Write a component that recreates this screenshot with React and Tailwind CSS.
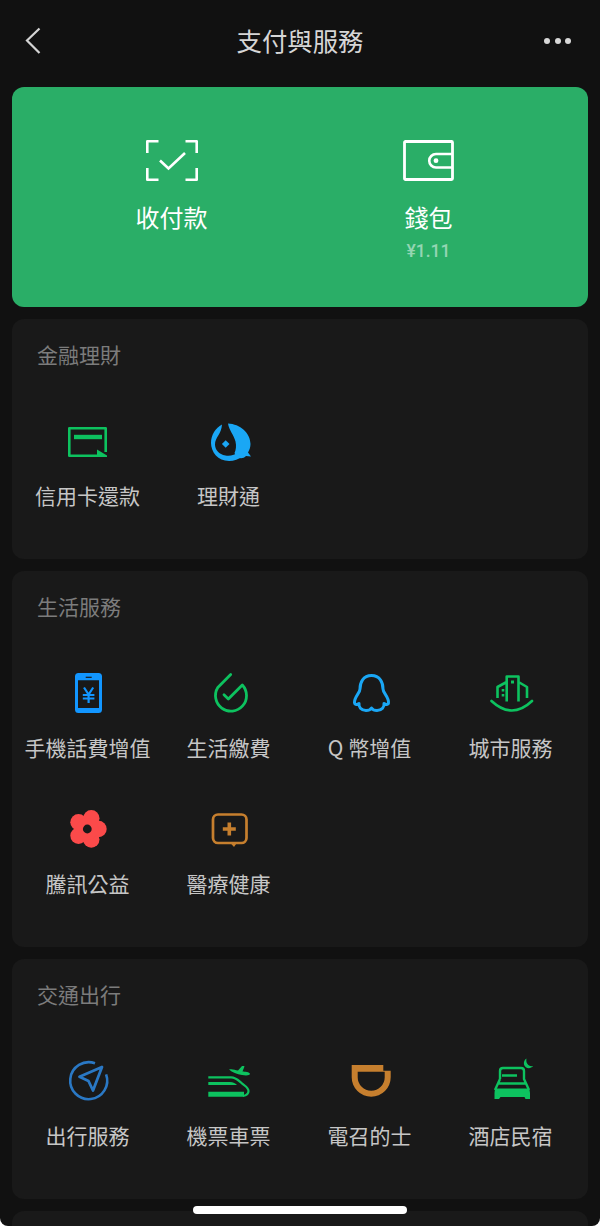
const FONT = "font-['Noto_Sans_CJK_TC','Noto_Sans',sans-serif]";

const G = "#0dc25f";
const B = "#1aa7f5";
const O = "#c67f2e";

function Svg({ children }) {
  return (
    <svg width="48" height="48" viewBox="0 0 48 48" fill="none" className="block">
      {children}
    </svg>
  );
}

const CardIcon = () => (
  <Svg>
    <path d="M41.7 33V9.3H5.3V36.7H33" stroke={G} strokeWidth="2.6" strokeLinejoin="round" />
    <path d="M10 18H38" stroke={G} strokeWidth="4.4" />
    <path d="M33 30.5L43 36.5V38H33Z" fill={G} />
  </Svg>
);

const FishIcon = () => (
  <Svg>
    <path d="M17 5.5C10.5 9 6 16 6 24C6 33 13 42 24 42C29 42 34 40 37.5 37.5L33.5 33.5C30 36 25 37.3 20.5 36.5C14 35.5 10 30.5 10 25.5C10 18.5 16.5 15 17 5.5Z" fill={B} />
    <path d="M23 4.5C35 5 45.5 14 45.5 25C45.5 28 44.5 31 43 33.5L46 37.5L41 37C38.5 39.5 35.5 40 32 38C30.5 36.5 30 35 29.5 34C31 31 31.5 27 30.5 22.5C29 16 24 11.5 23 4.5Z" fill={B} />
    <path d="M20.7 21.2L24.5 25L20.7 28.8L16.9 25Z" fill={B} />
  </Svg>
);

const PhoneIcon = () => {
  const c = "#1296ff";
  return (
    <Svg>
      <rect x="12.5" y="5.5" width="24" height="37" rx="2" stroke={c} strokeWidth="3" />
      <path d="M12 7H37V11.2H12ZM12 39H37V43H12Z" fill={c} />
      <path d="M21.7 8.3H27.7" stroke="#191919" strokeWidth="1.2" />
      <path d="M20 18.5L24.6 25.5L29.2 18.5M18.8 26H30.4M18.8 29.5H30.4M24.6 25.5V34" stroke={c} strokeWidth="2.2" />
    </Svg>
  );
};

const DropIcon = () => (
  <Svg>
    <path d="M25.7 5.5L12.8 18.5A15.5 15.5 0 1 0 37.3 16L23.3 30L19 25.7" stroke={G} strokeWidth="2.8" strokeLinecap="round" strokeLinejoin="round" />
  </Svg>
);

const QQIcon = () => (
  <Svg>
    <path d="M25.5 6.5C17 6.5 14 13.5 14 20C14 24 8 28 8.5 34C8.7 36 11 36 13 34.5C12.5 38 15 41.5 20 41.5C22.5 41.5 24.5 40.5 25.5 39C26.5 40.5 28.5 41.5 31 41.5C36 41.5 38.5 38 38 34.5C40 36 42.3 36 42.5 34C43 28 37 24 37 20C37 13.5 34 6.5 25.5 6.5Z" stroke={B} strokeWidth="3" strokeLinejoin="round" />
  </Svg>
);

const CityIcon = () => (
  <Svg>
    <path d="M4.5 32Q25 51 45 32" stroke={G} strokeWidth="2.6" strokeLinecap="round" />
    <path d="M10.5 29V18L19.7 13V7.5H31.5V13L40 18V29M19.7 13V32.5M31.5 13V32.5" stroke={G} strokeWidth="2.6" strokeLinejoin="round" />
    <path d="M24 11.5H27V14.5H24ZM14.7 20H17.3V22.6H14.7ZM14.7 25H17.3V27.6H14.7Z" fill={G} />
  </Svg>
);

const FlowerIcon = () => {
  const c = "#fb4a4a";
  const pts = [
    [27.3, 13.3],
    [34.5, 24],
    [27.3, 34.5],
    [14.5, 30.8],
    [14.5, 17.2],
  ];
  return (
    <Svg>
      {pts.map(([x, y], i) => (
        <circle key={i} cx={x} cy={y} r="8.2" fill={c} />
      ))}
      <circle cx="23.3" cy="24" r="11" fill={c} />
      <circle cx="23.3" cy="24" r="4.4" fill="#191919" />
    </Svg>
  );
};

const MedicalIcon = () => (
  <Svg>
    <rect x="8" y="9.5" width="33.5" height="28.5" rx="5" stroke={O} strokeWidth="2.7" />
    <path d="M24.3 17.5V30.5M17.8 24H30.8" stroke={O} strokeWidth="3.6" />
    <path d="M24.5 37H32.5L29 42Z" fill={O} />
  </Svg>
);

const NavIcon = () => {
  const c = "#2a78c4";
  return (
    <Svg>
      <path d="M31 6.3A18.5 18.5 0 1 0 42.1 17.4" stroke={c} strokeWidth="2.6" />
      <path d="M38 10L15.5 19.8L24.5 24L29 33.5Z" stroke={c} strokeWidth="2.8" strokeLinejoin="round" />
    </Svg>
  );
};

const TrainIcon = () => (
  <Svg>
    <path d="M24 12.5C27 11.5 30 13 33 13.5L37 9C38.5 9 39.5 9 39.5 9.5L37.5 14.5C40 14.8 44.5 14.8 45 16.8C45 18.5 41 18.7 37 18C32 17 27 15.5 24 12.5Z" fill={G} />
    <path d="M3.3 20.3H26C31 20.3 33 23 36.5 26C39 28.5 43.5 30 43.5 34C43.5 37 41.5 38.5 38 39" stroke={G} strokeWidth="2.2" />
    <path d="M3.3 25H25C28 25 31 26.5 32 28H3.3Z" fill={G} />
    <path d="M3.3 34.7H39V39.7H3.3Z" fill={G} />
  </Svg>
);

const DidiIcon = () => (
  <Svg>
    <path
      fillRule="evenodd"
      clipRule="evenodd"
      d="M5.7 8H37.3V13.7H44.7V20.2A19.5 19.5 0 0 1 5.7 20.2ZM11.7 14.7V20.2A13.5 13.5 0 0 0 38.7 20.2V14.7Z"
      fill={O}
    />
  </Svg>
);

const BedIcon = () => (
  <Svg>
    <path d="M13 22V14Q13 11 16 11H34Q37 11 37 14V22L42 33M13 22L8 33M15 18.5H30M11.5 26.5H39" stroke={G} strokeWidth="2.4" strokeLinejoin="round" />
    <path d="M8.5 31.5H41.5Q43 33 43 36V42H38.5L37.5 40H13.5L12 42H7.5V36Q7.5 33 8.5 31.5Z" fill={G} />
    <path d="M39.5 1.5C38.5 6 41.5 10 46 9C43.5 12.5 38 11.5 37 7.5C36.5 5 37.5 2.5 39.5 1.5Z" fill={G} />
  </Svg>
);

function Item({ Icon, label, labelGap }) {
  return (
    <div className="flex flex-col items-center">
      <div className="h-12 w-12">
        <Icon />
      </div>
      <div className={`whitespace-nowrap text-[21px] leading-7 text-[#c6c6c6] ${labelGap}`}>{label}</div>
    </div>
  );
}

function Section({ title, items, first = false, titleGap = "mt-[49.5px]", labelGap = "mt-4" }) {
  return (
    <section className={`rounded-xl bg-[#191919] pb-[49.5px] pl-[5px] pr-[7px] pt-[20.5px] ${first ? "mt-3" : "mt-[12.5px]"}`}>
      <h2 className="pl-5 text-[21px] font-normal leading-7 text-[#7c7c7c]">{title}</h2>
      <div className={`grid grid-cols-4 gap-y-11 ${titleGap}`}>
        {items.map((it) => (
          <Item key={it.label} {...it} labelGap={labelGap} />
        ))}
      </div>
    </section>
  );
}

export default function App() {
  return (
    <div className="h-[1226px] w-[600px] bg-white">
      <div className={`relative h-[1226px] w-[600px] overflow-hidden rounded-b-lg bg-[#111111] px-3 ${FONT}`}>
        <header className="relative flex h-[87px] items-center justify-between pb-1.5">
          <svg width="18" height="28" viewBox="0 0 18 28" fill="none" className="ml-3">
            <path d="M15.5 1.5L3 13.5L15.5 26" stroke="#d4d4d4" strokeWidth="2.2" />
          </svg>
          <h1 className="absolute inset-x-0 top-[22px] text-center text-[25.4px] font-normal leading-9 text-[#d6d6d6]">
            支付與服務
          </h1>
          <div className="mr-[17px] flex gap-[4.5px]">
            <span className="h-[6px] w-[6px] rounded-full bg-[#d8d8d8]" />
            <span className="h-[6px] w-[6px] rounded-full bg-[#d8d8d8]" />
            <span className="h-[6px] w-[6px] rounded-full bg-[#d8d8d8]" />
          </div>
        </header>

        <section className="grid h-[220px] grid-cols-2 rounded-xl bg-[#2aae67] px-[31px] pt-[53px]">
          <div className="flex flex-col items-center">
            <svg width="52" height="41" viewBox="0 0 52 41" fill="none" className="block">
              <path d="M1.3 13V1.3H12.5M39.5 1.3H50.7V13M50.7 28V39.7H39.5M12.5 39.7H1.3V28" stroke="#fff" strokeWidth="2.6" strokeLinejoin="round" />
              <path d="M14 20.5L22.5 28.5L39 13" stroke="#fff" strokeWidth="2.6" />
            </svg>
            <div className="mt-5 text-[24px] font-normal leading-8 text-white">收付款</div>
          </div>
          <div className="flex flex-col items-center">
            <svg width="52" height="41" viewBox="0 0 52 41" fill="none" className="block">
              <rect x="1.5" y="1.5" width="48" height="38" rx="1" stroke="#fff" strokeWidth="2.8" />
              <path d="M49 14H33A6.5 6.5 0 0 0 33 27.5H49" stroke="#fff" strokeWidth="2.6" />
              <circle cx="33" cy="20.7" r="2.4" fill="#fff" />
            </svg>
            <div className="mt-5 text-[24px] font-normal leading-8 text-white">錢包</div>
            <div className="mt-1.5 font-['Roboto',sans-serif] text-[17.5px] font-medium leading-6 text-white/50">¥1.11</div>
          </div>
        </section>

        <Section
          first
          title="金融理財"
          titleGap="mt-[51.5px]"
          labelGap="mt-3.5"
          items={[
            { Icon: CardIcon, label: "信用卡還款" },
            { Icon: FishIcon, label: "理財通" },
          ]}
        />
        <Section
          title="生活服務"
          items={[
            { Icon: PhoneIcon, label: "手機話費增值" },
            { Icon: DropIcon, label: "生活繳費" },
            { Icon: QQIcon, label: "Q 幣增值" },
            { Icon: CityIcon, label: "城市服務" },
            { Icon: FlowerIcon, label: "騰訊公益" },
            { Icon: MedicalIcon, label: "醫療健康" },
          ]}
        />
        <Section
          title="交通出行"
          items={[
            { Icon: NavIcon, label: "出行服務" },
            { Icon: TrainIcon, label: "機票車票" },
            { Icon: DidiIcon, label: "電召的士" },
            { Icon: BedIcon, label: "酒店民宿" },
          ]}
        />
        <section className="mt-[12.5px] h-20 rounded-xl bg-[#191919]" />

        <div className="absolute bottom-3 left-[193px] h-2 w-[214px] rounded-full bg-white" />
      </div>
    </div>
  );
}
